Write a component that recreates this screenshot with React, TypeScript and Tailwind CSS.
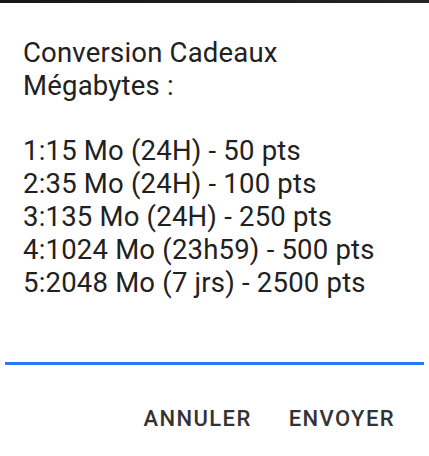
import React from "react";

export default function App() {
  const lines = [
    "Conversion Cadeaux",
    "Mégabytes :",
    "\u00a0",
    "1:15 Mo (24H) - 50 pts",
    "2:35 Mo (24H) - 100 pts",
    "3:135 Mo (24H) - 250 pts",
    "4:1024 Mo (23h59) - 500 pts",
    "5:2048 Mo (7 jrs) - 2500 pts",
  ];
  return (
    <div
      className="w-[429px] h-[456px] bg-white flex flex-col overflow-hidden"
      style={{ fontFamily: "Roboto, 'Noto Sans', sans-serif" }}
    >
      <div className="h-[3px] w-full shrink-0 bg-gradient-to-r from-[#15171c] via-[#1d1d1f] to-[#252525]" />
      <div className="pt-[34px] pl-[23px] text-[27.5px] leading-[32.8px] tracking-[0.2px] text-[#212121]">
        {lines.map((l, i) => (
          <div key={i} className="whitespace-nowrap">{l}</div>
        ))}
      </div>
      <div className="mt-[63px] mx-[5px] h-[3px] shrink-0 bg-[#2979ff]" />
      <div className="flex justify-end items-center gap-[37px] pr-[34px] mt-[37px] leading-normal">
        <span className="text-[22px] font-medium text-[#333333] tracking-[1.4px]">ANNULER</span>
        <span className="text-[22px] font-medium text-[#333333] tracking-[1.4px]">ENVOYER</span>
      </div>
    </div>
  );
}
